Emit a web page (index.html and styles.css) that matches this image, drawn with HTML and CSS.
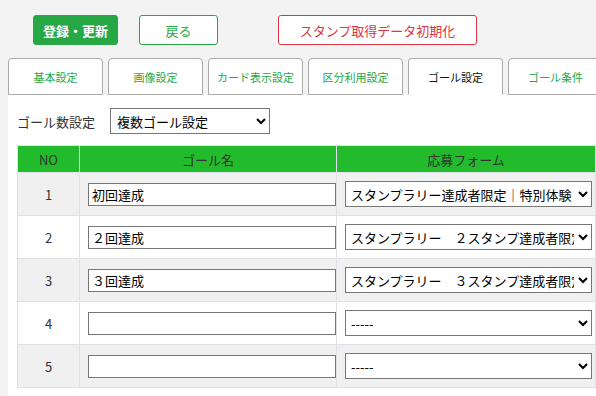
FILE: index.html
```html
<!DOCTYPE html>
<html lang="ja">
<head>
  <meta charset="UTF-8">
  <title>ゴール設定</title>
  <link rel="stylesheet" href="styles.css">
</head>
<body>
  <div class="toolbar">
    <button class="btn btn-save">登録・更新</button>
    <button class="btn btn-back">戻る</button>
    <button class="btn btn-reset">スタンプ取得データ初期化</button>
  </div>

  <div class="tabs">
    <div class="tab">基本設定</div>
    <div class="tab">画像設定</div>
    <div class="tab">カード表示設定</div>
    <div class="tab">区分利用設定</div>
    <div class="tab active">ゴール設定</div>
    <div class="tab">ゴール条件</div>
  </div>

  <div class="panel">
    <div class="goal-count">
      <label class="goal-count-label">ゴール数設定</label>
      <select class="goal-count-select">
        <option>複数ゴール設定</option>
      </select>
    </div>

    <table class="goal-table">
      <thead>
        <tr>
          <th class="col-no">NO</th>
          <th class="col-name">ゴール名</th>
          <th class="col-form">応募フォーム</th>
        </tr>
      </thead>
      <tbody>
        <tr>
          <td class="no">1</td>
          <td class="name"><input class="name-input" type="text" value="初回達成"></td>
          <td class="form"><select class="form-select"><option>スタンプラリー達成者限定｜特別体験 応募フォーム</option></select></td>
        </tr>
        <tr>
          <td class="no">2</td>
          <td class="name"><input class="name-input" type="text" value="２回達成"></td>
          <td class="form"><select class="form-select"><option>スタンプラリー　２スタンプ達成者限定</option></select></td>
        </tr>
        <tr>
          <td class="no">3</td>
          <td class="name"><input class="name-input" type="text" value="３回達成"></td>
          <td class="form"><select class="form-select"><option>スタンプラリー　３スタンプ達成者限定</option></select></td>
        </tr>
        <tr>
          <td class="no">4</td>
          <td class="name"><input class="name-input" type="text" value=""></td>
          <td class="form"><select class="form-select"><option>-----</option></select></td>
        </tr>
        <tr>
          <td class="no">5</td>
          <td class="name"><input class="name-input" type="text" value=""></td>
          <td class="form"><select class="form-select"><option>-----</option></select></td>
        </tr>
      </tbody>
    </table>
  </div>
</body>
</html>
```

FILE: styles.css
```css
body {
  margin: 0;
  background: #f3f3f3;
  font-family: "Noto Sans CJK JP", "Noto Sans", sans-serif;
  font-size: 13px;
  color: #333;
  overflow: hidden;
}

.toolbar {
  display: flex;
  padding: 15px 0 0 33px;
  height: 30px;
}

.btn {
  height: 30px;
  border-radius: 3px;
  font-family: inherit;
  font-size: 13px;
  padding: 0;
  background: #fff;
  cursor: pointer;
}

.btn-save {
  width: 85px;
  background: #28a745;
  border: 1px solid #28a745;
  color: #fff;
  font-weight: bold;
}

.btn-back {
  width: 79px;
  margin-left: 21px;
  border: 1px solid #28a745;
  color: #28a745;
}

.btn-reset {
  width: 199px;
  margin-left: 60px;
  border: 1px solid #dc3545;
  color: #dc3545;
}

.tabs {
  display: flex;
  gap: 5px;
  margin-top: 13px;
  padding-left: 8px;
  height: 37px;
}

.tab {
  flex: 0 0 95px;
  box-sizing: border-box;
  height: 37px;
  display: flex;
  align-items: center;
  justify-content: center;
  background: #fff;
  border: 1px solid #aaa;
  border-radius: 4px 4px 0 0;
  color: #28a745;
  font-size: 11px;
}

.tab.active {
  color: #111;
  border-bottom-color: #fff;
}

.panel {
  margin-left: 8px;
  background: #fff;
  padding: 13px 0 20px 9px;
}

.goal-count {
  display: flex;
  align-items: center;
  height: 26px;
}

.goal-count-label {
  width: 93px;
  color: #333;
}

.goal-count-select {
  width: 160px;
  height: 26px;
  border: 1px solid #767676;
  border-radius: 0;
  font-family: inherit;
  font-size: 13px;
  color: #000;
  background: #fff;
  padding: 0 2px;
}

.goal-table {
  margin-top: 11px;
  border-collapse: collapse;
  table-layout: fixed;
  width: 579px;
}

.goal-table th {
  background: #22bb2c;
  color: #333;
  font-weight: normal;
  height: 26px;
  padding: 0;
  border: 1px solid #dee2e6;
}

.col-no {
  width: 61px;
}

.col-name {
  width: 256px;
}

.goal-table td {
  border: 1px solid #dee2e6;
  height: 42px;
  padding: 0;
  vertical-align: middle;
}

.goal-table tbody tr:nth-child(odd) {
  background: #f0f0f0;
}

.goal-table tbody tr:nth-child(even) {
  background: #fff;
}

.no {
  text-align: center;
}

.name {
  padding-left: 8px !important;
}

.name-input {
  box-sizing: border-box;
  width: 248px;
  height: 23px;
  border: 1px solid #767676;
  border-radius: 0;
  padding: 0 3px;
  font-family: inherit;
  font-size: 13px;
  color: #000;
  display: block;
}

.form {
  padding-left: 8px !important;
}

.form-select {
  box-sizing: border-box;
  width: 247px;
  height: 26px;
  border: 1px solid #767676;
  border-radius: 0;
  font-family: inherit;
  font-size: 13px;
  color: #000;
  background: #fff;
  padding: 0 1px;
  display: block;
}
```
